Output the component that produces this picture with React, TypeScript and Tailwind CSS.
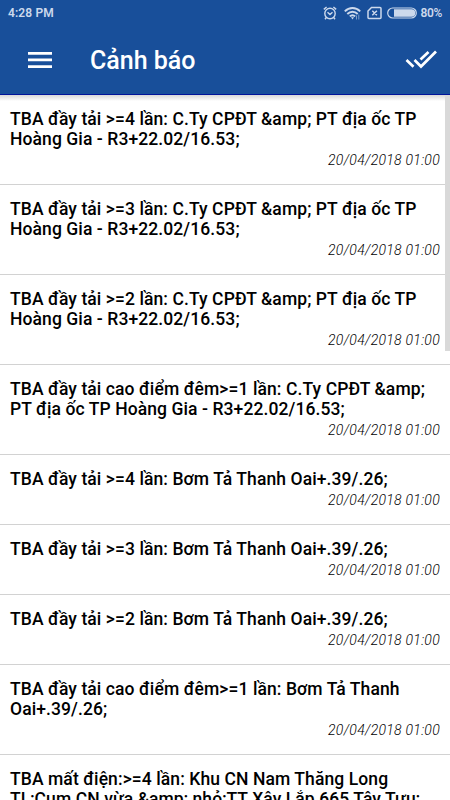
type Alert = {
    lines: string[],
    date: string,
}

const date = '20/04/2018 01:00'

const alerts: Alert[] = [
    {lines: ['TBA đầy tải >=4 lần: C.Ty CPĐT &amp; PT địa ốc TP', 'Hoàng Gia - R3+22.02/16.53;'], date},
    {lines: ['TBA đầy tải >=3 lần: C.Ty CPĐT &amp; PT địa ốc TP', 'Hoàng Gia - R3+22.02/16.53;'], date},
    {lines: ['TBA đầy tải >=2 lần: C.Ty CPĐT &amp; PT địa ốc TP', 'Hoàng Gia - R3+22.02/16.53;'], date},
    {lines: ['TBA đầy tải cao điểm đêm>=1 lần: C.Ty CPĐT &amp;', 'PT địa ốc TP Hoàng Gia - R3+22.02/16.53;'], date},
    {lines: ['TBA đầy tải >=4 lần: Bơm Tả Thanh Oai+.39/.26;'], date},
    {lines: ['TBA đầy tải >=3 lần: Bơm Tả Thanh Oai+.39/.26;'], date},
    {lines: ['TBA đầy tải >=2 lần: Bơm Tả Thanh Oai+.39/.26;'], date},
    {lines: ['TBA đầy tải cao điểm đêm>=1 lần: Bơm Tả Thanh', 'Oai+.39/.26;'], date},
    {lines: ['TBA mất điện:>=4 lần: Khu CN Nam Thăng Long', 'TL;Cụm CN vừa &amp; nhỏ;TT Xây Lắp 665 Tây Tựu;'], date},
]

function StatusBar() {
    return (
        <div className="flex h-[25px] items-center justify-between px-2 text-[12px] font-semibold text-[#ccd9ec]">
            <span className="tracking-[0.01em]">4:28 PM</span>
            <div className="flex items-center">
                <svg className="mr-[7px]" width="14" height="14" viewBox="0 0 14 14" fill="none" stroke="currentColor" strokeWidth="1.4">
                    <circle cx="7" cy="7.5" r="5.2" />
                    <path d="M.8 3.400 3.600 1M13.200 3.400 10.400 1M4.500 6.300 7 8.500 9.500 6.300M3.300 11.500 2 13.200M10.700 11.500l1.300 1.700" />
                </svg>
                <svg className="mr-[6px]" width="17" height="14" viewBox="0 0 17 14" fill="none" stroke="currentColor" strokeWidth="1.9">
                    <path d="M.8 5.400C5.200.8 11.800.8 16.200 5.400M3.300 8c3-3 7.400-3 10.400 0M5.800 10.400c1.600-1.500 3.800-1.500 5.400 0" />
                    <path d="M7 11.200h3L8.500 13.500z" fill="currentColor" stroke="none" />
                    <path d="M12.500 9.500v4M14.800 8.500v5" strokeWidth=".8" opacity=".7" />
                </svg>
                <svg className="mr-[5px]" width="15" height="14" viewBox="0 0 15 14" fill="none" stroke="currentColor" strokeWidth="1.5">
                    <path d="M4.500 1.500H13q1 0 1 1v9q0 1-1 1H2q-1 0-1-1V5zM5.300 4.700l4.600 4.600M9.900 4.700 5.300 9.300" />
                </svg>
                <svg className="mr-1" width="30" height="12" viewBox="0 0 30 12">
                    <rect x=".7" y="1" width="28.600" height="10" rx="5" fill="none" stroke="currentColor" strokeWidth="1.200" />
                    <path d="M7 2.200h17.500a3.800 3.800 0 0 1 0 7.600H7z" fill="currentColor" />
                </svg>
                <span className="tracking-[-0.03em]">80%</span>
            </div>
        </div>
    )
}

export default function App() {
    return (
        <div className="flex h-[800px] w-[450px] flex-col overflow-hidden bg-white font-[Roboto,sans-serif] text-black">
            <header className="h-[95px] shrink-0 border-b border-[#00149a] bg-[#184f9a]">
                <StatusBar />
                <div className="flex h-[70px] items-center pl-7 pr-[13px]">
                    <svg width="24" height="18" viewBox="0 0 24 18" fill="#fff">
                        <path d="M0 1h24v2.700H0zM0 7.600h24v2.700H0zM0 14.200h24v2.700H0z" />
                    </svg>
                    <h1 className="ml-[38px] pt-0.5 text-[25px] font-medium text-white">Cảnh báo</h1>
                    <svg className="ml-auto" width="33" height="22" viewBox="0 0 33 22" fill="none" stroke="#fff" strokeWidth="2.700">
                        <path d="M2.500 11 9.500 17.700M10.500 11l6.500 6.500L32 2.500M16.500 10.500 24.500 3" />
                    </svg>
                </div>
            </header>
            <div className="relative grow overflow-hidden">
                <div className="absolute top-0 left-0 h-[6px] w-full bg-linear-to-b from-[#d8d8d8] to-transparent" />
                <div className="absolute top-0 right-0 h-64 w-[5px] bg-[#d9d9d9]" />
                {alerts.map((alert, index) => (
                    <div key={index} className="border-b border-[#d2d2d2] px-[10px] pt-[14px] pb-[13px]">
                        {alert.lines.map((line) => (
                            <p key={line} className="text-[17.500px] leading-5 font-medium tracking-[0.09px] whitespace-nowrap">{line}</p>
                        ))}
                        <p className="text-right text-[14px] leading-[22px] font-light tracking-[0.28px] italic">{alert.date}</p>
                    </div>
                ))}
            </div>
        </div>
    )
}
